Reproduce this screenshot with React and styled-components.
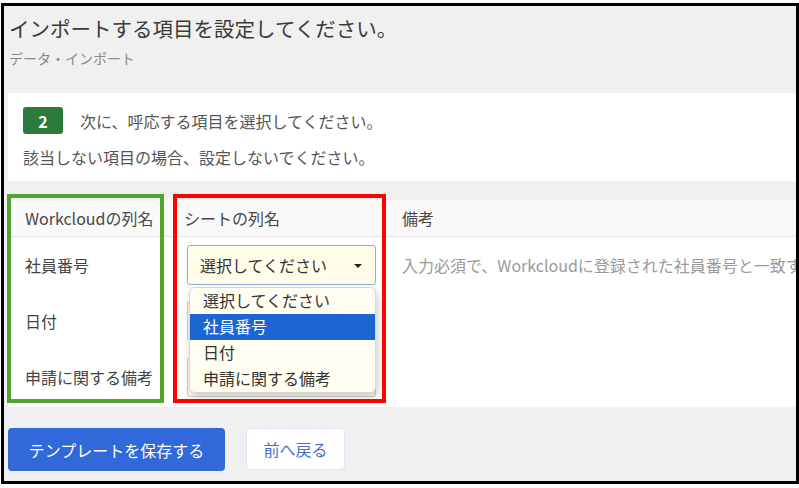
import React from "react";
import styled, { createGlobalStyle } from "styled-components";

const GlobalStyle = createGlobalStyle`
  html, body { margin: 0; padding: 0; background: #ffffff; }
  body {
    font-family: "Noto Sans CJK JP", "Noto Sans", "Open Sans", sans-serif;
    -webkit-font-smoothing: antialiased;
  }
  * { box-sizing: border-box; }
`;

const Frame = styled.div`
  margin: 3px 0 0 1px;
  width: 798px;
  height: 481px;
  border: 3px solid #000;
  background: #f0f0f0;
  overflow: hidden;
  position: relative;
`;

const Header = styled.div`
  padding: 8px 0 0 5px;
`;

const Title = styled.h1`
  margin: 0;
  font-size: 20.5px;
  line-height: 28px;
  font-weight: 400;
  color: #3a3a3a;
  white-space: nowrap;
`;

const Subtitle = styled.div`
  margin-top: 6px;
  font-size: 14px;
  line-height: 20px;
  color: #8a8a8a;
`;

const Card = styled.div`
  margin: 25px 0 0 4px;
  height: 88px;
  background: #fff;
  padding: 14px 0 0 15px;
`;

const StepRow = styled.div`
  display: flex;
  align-items: center;
  gap: 17px;
`;

const Badge = styled.span`
  display: inline-flex;
  align-items: center;
  justify-content: center;
  width: 40px;
  height: 27px;
  border-radius: 3px;
  background: #2d7a3e;
  color: #fff;
  font-weight: 700;
  font-size: 16px;
`;

const CardText = styled.div`
  font-size: 16px;
  line-height: 24px;
  color: #555;
  white-space: nowrap;
  margin-top: ${(p) => p.$mt || 0}px;
`;

const TableWrap = styled.div`
  position: relative;
  margin: 19px 0 0 4px;
  background: #fff;
  padding-bottom: 2px;
`;

const Grid = styled.div`
  display: grid;
  grid-template-columns: 164px 218px 1fr;
`;

const HeadCell = styled.div`
  height: 37px;
  display: flex;
  align-items: center;
  padding-left: ${(p) => p.$pl}px;
  background: #f9f9f9;
  border-bottom: 1px solid #e4e4e4;
  font-size: 16px;
  color: #484848;
  white-space: nowrap;
`;

const Cell = styled.div`
  height: 56px;
  display: flex;
  align-items: center;
  padding-left: ${(p) => p.$pl}px;
  font-size: 16px;
  color: ${(p) => (p.$muted ? "#9a9a9a" : "#444")};
  white-space: nowrap;
  overflow: ${(p) => (p.$open ? "visible" : "hidden")};
  z-index: ${(p) => (p.$open ? 4 : "auto")};
  position: relative;
`;

const SelectBox = styled.div`
  position: relative;
  width: 189px;
  height: 40px;
  border: 1px solid ${(p) => (p.$focus ? "#8caee8" : "#cfcfcf")};
  border-radius: 3px;
  background: #fffce9;
  display: flex;
  align-items: center;
  justify-content: space-between;
  padding: 0 13px 0 12px;
  font-size: 16px;
  color: #333;
`;

const Caret = styled.span`
  width: 0;
  height: 0;
  border-left: 4px solid transparent;
  border-right: 4px solid transparent;
  border-top: 4px solid #222;
  margin-top: 2px;
  margin-left: auto;
`;

const Dropdown = styled.ul`
  position: absolute;
  top: 41px;
  left: 1px;
  width: 187px;
  margin: 0;
  padding: 0;
  list-style: none;
  background: #fffef0;
  border: 1px solid #d6d6d6;
  border-radius: 6px;
  box-shadow: 2px 4px 8px rgba(0, 0, 0, 0.2);
  overflow: hidden;
  z-index: 5;
`;

const Option = styled.li`
  height: 26px;
  line-height: 24px;
  padding-left: 13px;
  font-size: 16px;
  color: ${(p) => (p.$active ? "#fff" : "#333")};
  background: ${(p) => (p.$active ? "#1b66d2" : "transparent")};
`;

const Annot = styled.div`
  position: absolute;
  top: -6px;
  left: ${(p) => p.$left}px;
  width: ${(p) => p.$w}px;
  height: 209px;
  border: 4px solid ${(p) => p.$color};
  pointer-events: none;
  z-index: 10;
`;

const Actions = styled.div`
  display: flex;
  gap: 21px;
  margin: 21px 0 0 4px;
`;

const PrimaryButton = styled.button`
  width: 217px;
  height: 43px;
  border: none;
  border-radius: 4px;
  background: #3169da;
  color: #fff;
  font-family: inherit;
  font-size: 16px;
`;

const SecondaryButton = styled.button`
  width: 99px;
  height: 42px;
  border: 1px solid #dbe5f6;
  border-radius: 4px;
  background: #fff;
  color: #4a6fc6;
  font-family: inherit;
  font-size: 16px;
`;

const rows = [
  { label: "社員番号", note: "入力必須で、Workcloudに登録された社員番号と一致するものを選択してください。" },
  { label: "日付", note: "" },
  { label: "申請に関する備考", note: "" },
];

const options = ["選択してください", "社員番号", "日付", "申請に関する備考"];

export default function App() {
  return (
    <>
      <GlobalStyle />
      <Frame>
        <Header>
          <Title>インポートする項目を設定してください。</Title>
          <Subtitle>データ・インポート</Subtitle>
        </Header>
        <Card>
          <StepRow>
            <Badge>2</Badge>
            <CardText>次に、呼応する項目を選択してください。</CardText>
          </StepRow>
          <CardText $mt={11}>該当しない項目の場合、設定しないでください。</CardText>
        </Card>
        <TableWrap>
          <Grid>
            <HeadCell $pl={17}>Workcloudの列名</HeadCell>
            <HeadCell $pl={12}>シートの列名</HeadCell>
            <HeadCell $pl={12}>備考</HeadCell>
            {rows.map((r, i) => (
              <React.Fragment key={r.label}>
                <Cell $pl={17}>{r.label}</Cell>
                <Cell $pl={15} $open={i === 0}>
                  <SelectBox $focus={i === 0}>
                    {i === 0 && <span>選択してください</span>}
                    <Caret />
                    {i === 0 && (
                      <Dropdown>
                        {options.map((o, j) => (
                          <Option key={o} $active={j === 1}>{o}</Option>
                        ))}
                      </Dropdown>
                    )}
                  </SelectBox>
                </Cell>
                <Cell $pl={12} $muted>{r.note}</Cell>
              </React.Fragment>
            ))}
          </Grid>
          <Annot $left={-1} $w={157} $color="#4fa52f" />
          <Annot $left={165} $w={213} $color="#ff0000" />
        </TableWrap>
        <Actions>
          <PrimaryButton>テンプレートを保存する</PrimaryButton>
          <SecondaryButton>前へ戻る</SecondaryButton>
        </Actions>
      </Frame>
    </>
  );
}
